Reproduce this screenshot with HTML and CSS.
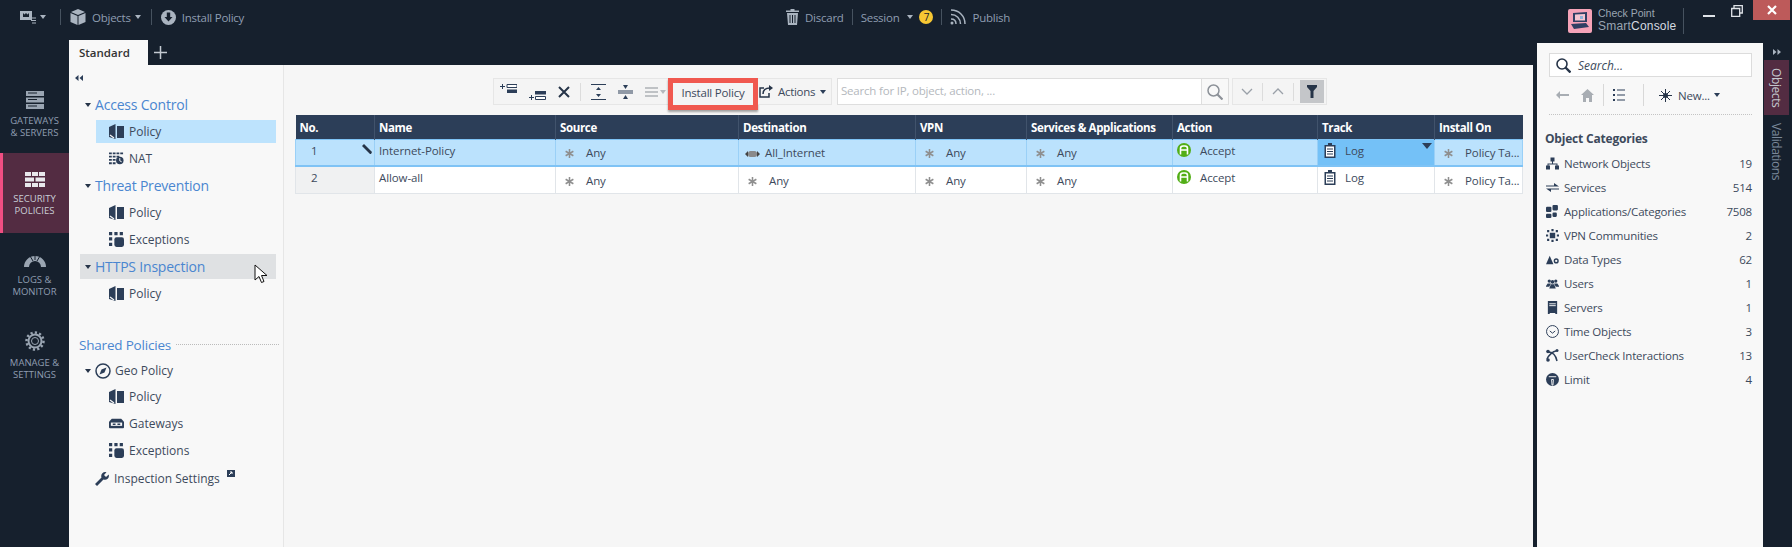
FILE: index.html
```html
<!DOCTYPE html>
<html lang="en">
<head>
    <meta charset="UTF-8">
    <title>SmartConsole</title>
    <link rel="stylesheet" href="styles.css">
</head>
<body>
    <svg class="sprite" xmlns="http://www.w3.org/2000/svg">
        <symbol id="i-policy" viewBox="0 0 15 15"><path d="M0 3l6.500-3v15l-6.500-2zM8 2h7v12H8z"/><path d="M1 11l4 3" stroke="#f8f8f8" stroke-width="1.200"/></symbol>
        <symbol id="i-nat" viewBox="0 0 16 13"><path d="M0 0h3v2H0zM4 0h3v2H4zM8 0h3v2H8zM12 0h3v2h-3zM0 3.500h3v2H0zM4 3.500h3v2H4zM8 3.500h3v2H8zM0 7h3v2H0zM4 7h3v2H4zM0 10.500h3v2H0zM4 10.500h3v2H4z"/><circle cx="11.500" cy="8.500" r="4"/><path d="M11.500 6v3l2 1" stroke="#fff" fill="none"/></symbol>
        <symbol id="i-exc" viewBox="0 0 14 14"><path d="M0 0h3v3H0zM5 0h3v3H5zM10 0h3v3h-3zM0 5h3v3H0zM0 10h3v3H0z"/><rect x="5" y="5" width="9" height="9" rx="2"/></symbol>
        <symbol id="i-gate" viewBox="0 0 16 10"><path d="M3 0h10l3 3v6a1 1 0 0 1-1 1H1a1 1 0 0 1-1-1V3z"/><path d="M2 4h12v3.500H2z" fill="#f8f8f8"/><path d="M4 5h3v1.500H4zM9 5h3v1.500H9z"/></symbol>
        <symbol id="i-any" viewBox="0 0 10 10"><path d="M5 0v10M.7 2.500l8.600 5M9.300 2.500l-8.600 5" stroke="#8f8f8f" stroke-width="1.700"/></symbol>
        <symbol id="i-accept" viewBox="0 0 14 14"><circle cx="7" cy="7" r="7" fill="#52ae16"/><path d="M3.500 11.500V5.500Q3.500 3 6 3h2Q10.500 3 10.500 5.500v6M3.500 7h7" fill="none" stroke="#fff" stroke-width="1.600"/></symbol>
        <symbol id="i-log" viewBox="0 0 12 15"><path d="M4 0h4v2h3.500v13H.500V2H4z" fill="#2c3e58"/><path d="M2 3.500h8v10H2z" fill="#fff"/><path d="M3 6h6M3 8.500h6M3 11h6" stroke="#2c3e58"/></symbol>
        <symbol id="i-caret" viewBox="0 0 6 4"><path d="M0 0h6L3 4z"/></symbol>
    </svg>

    <div class="app">
        <!-- Górny pasek -->
        <header class="topbar">
            <div class="top-group top-left">
                <svg class="top-ico" width="16" height="14" viewBox="0 0 16 14"><path d="M0 1h12v9H0z" fill="#aab4c0"/><path d="M3 3l1.500 1.500L6 3l1.500 1.500L9 3v4H3z" fill="#16202d"/><path d="M10 8h6M11 10.500h5M12 13h4" stroke="#aab4c0"/></svg>
                <svg class="caret"><use href="#i-caret"/></svg>
                <span class="top-sep sep-a"></span>
                <svg class="top-ico" width="16" height="16" viewBox="0 0 16 16"><path d="M8 0l7 3-7 3-7-3z" fill="#aab4c0"/><path d="M.500 4l7 3v9l-7-3zM15.500 4l-7 3v9l7-3z" fill="#aab4c0"/></svg>
                <span class="top-text objects">Objects</span>
                <svg class="caret"><use href="#i-caret"/></svg>
                <span class="top-sep sep-b"></span>
                <svg class="top-ico" width="15" height="15" viewBox="0 0 15 15"><circle cx="7.500" cy="7.500" r="7.500" fill="#aab4c0"/><path d="M5.800 2.500h3.400v4.500h2.300L7.500 11.500 3.500 7h2.300z" fill="#16202d"/></svg>
                <span class="top-text">Install Policy</span>
            </div>
            <div class="top-group top-center">
                <svg class="top-ico" width="13" height="16" viewBox="0 0 13 16"><path d="M4.500 0h4v1.500H13V3H0V1.500h4.500zM1 4h11l-1 12H2z" fill="#aab4c0"/><path d="M4 6v8M6.500 6v8M9 6v8" stroke="#16202d"/></svg>
                <span class="top-text">Discard</span>
                <span class="top-sep"></span>
                <span class="top-text after-sep">Session</span>
                <svg class="caret session-caret"><use href="#i-caret"/></svg>
                <span class="badge">7</span>
                <span class="top-sep"></span>
                <svg class="top-ico" width="16" height="16" viewBox="0 0 16 16" fill="none" stroke="#aab4c0" stroke-width="1.500"><path d="M1 1c8 0 14 6 14 14M1 5.500c5.500 0 9.500 4 9.500 9.500M1 10c3 0 5 2 5 5"/><circle cx="2" cy="14" r="1.500" fill="#aab4c0" stroke="none"/></svg>
                <span class="top-text">Publish</span>
            </div>
            <div class="top-group top-right">
                <svg class="logo" width="24" height="24" viewBox="0 0 24 24"><rect width="24" height="24" rx="2" fill="#f5a3b8"/><path d="M5 4l14-1v10H5z" fill="#2f3f63"/><path d="M7 5.500l10-.5v6.500H7z" fill="#f5c6d2"/><path d="M12 7h3v3h-3z" fill="#8fb2d8"/><path d="M3 15l15-1 3 4-15 2z" fill="#2f3f63"/></svg>
                <div class="logo-text"><span>Check Point</span><span>Smart<b>Console</b></span></div>
                <span class="top-sep logo-sep"></span>
                <span class="win-min"></span>
                <svg class="win-restore" width="12" height="12" viewBox="0 0 12 12" fill="none" stroke="#dfe3e8" stroke-width="1.300"><path d="M3 3V.700h8.300V8H9"/><path d="M.700 3.500h8V11.300h-8z"/></svg>
                <span class="win-close">
                    <svg width="10" height="10" viewBox="0 0 10 10"><path d="M1 1l8 8M9 1l-8 8" stroke="#fff" stroke-width="2.200"/></svg>
                </span>
            </div>
        </header>

        <!-- Lewe menu -->
        <nav class="nav">
            <div class="nav-item">
                <svg width="18" height="18" viewBox="0 0 18 18"><path d="M0 0h18v5H0zM0 6.500h18v5H0zM0 13h18v5H0z" fill="#9aa5b2"/><path d="M2 2h9M2 8.500h9M2 15h9" stroke="#16202d"/></svg>
                <span>GATEWAYS<br>&amp; SERVERS</span>
            </div>
            <div class="nav-item active">
                <svg width="20" height="15" viewBox="0 0 20 15"><path d="M0 0h6v4H0zM7 0h6v4H7zM14 0h6v4h-6zM0 5.500h9v4H0zM10.500 5.500H20v4h-9.500zM0 11h6v4H0zM7 11h6v4H7zM14 11h6v4h-6z" fill="#e8e8ec"/></svg>
                <span>SECURITY<br>POLICIES</span>
            </div>
            <div class="nav-item">
                <svg width="22" height="14" viewBox="0 0 22 14"><path d="M0 13A11 11 0 0 1 22 13h-5A6 6 0 0 0 5 13z" fill="#9aa5b2"/><path d="M6 2l3 5M11 0v6M16 2l-3 5" stroke="#16202d"/></svg>
                <span>LOGS &amp;<br>MONITOR</span>
            </div>
            <div class="nav-item">
                <svg width="20" height="20" viewBox="0 0 20 20" fill="none" stroke="#9aa5b2"><circle cx="10" cy="10" r="6.500" stroke-width="2"/><circle cx="10" cy="10" r="3.500"/><circle cx="10" cy="10" r="8.500" stroke-width="2.500" stroke-dasharray="2.200 2.200"/></svg>
                <span>MANAGE &amp;<br>SETTINGS</span>
            </div>
        </nav>

        <div class="tabs">
            <div class="tab">Standard</div>
            <svg class="tab-add" width="13" height="13" viewBox="0 0 13 13"><path d="M6.500 0v13M0 6.500h13" stroke="#c4cad2" stroke-width="1.500"/></svg>
        </div>

        <main class="main">
            <aside class="tree">
                <div class="collapse">
                    <svg width="8" height="6" viewBox="0 0 8 6"><path d="M3.500 0v6L0 3zM8 0v6L4.500 3z" fill="#2c3e58"/></svg>
                </div>
                <div class="row head"><svg class="tw"><use href="#i-caret"/></svg>Access Control</div>
                <div class="row leaf selected"><svg class="leaf-ico"><use href="#i-policy"/></svg>Policy</div>
                <div class="row leaf"><svg class="leaf-ico"><use href="#i-nat"/></svg>NAT</div>
                <div class="row head"><svg class="tw"><use href="#i-caret"/></svg>Threat Prevention</div>
                <div class="row leaf"><svg class="leaf-ico"><use href="#i-policy"/></svg>Policy</div>
                <div class="row leaf"><svg class="leaf-ico"><use href="#i-exc"/></svg>Exceptions</div>
                <div class="row head hovered"><svg class="tw"><use href="#i-caret"/></svg>HTTPS Inspection
                    <svg class="cursor" width="14" height="20" viewBox="0 0 14 20"><path d="M1 1v15l4-3.500 2.500 6 2.500-1-2.500-6H13z" fill="#fff" stroke="#111"/></svg>
                </div>
                <div class="row leaf"><svg class="leaf-ico"><use href="#i-policy"/></svg>Policy</div>

                <div class="shared"><span>Shared Policies</span><i></i></div>
                <div class="row geo"><svg class="tw"><use href="#i-caret"/></svg>
                    <svg class="geo-ico" width="16" height="16" viewBox="0 0 16 16"><circle cx="8" cy="8" r="7" fill="none" stroke="#2c3e58" stroke-width="1.500"/><path d="M11.500 4.500L9.500 9.500 4.500 11.500 6.500 6.500z" fill="#2c3e58"/></svg>
                    Geo Policy
                </div>
                <div class="row leaf"><svg class="leaf-ico"><use href="#i-policy"/></svg>Policy</div>
                <div class="row leaf"><svg class="leaf-ico"><use href="#i-gate"/></svg>Gateways</div>
                <div class="row leaf"><svg class="leaf-ico"><use href="#i-exc"/></svg>Exceptions</div>
                <div class="row settings">
                    <svg width="14" height="14" viewBox="0 0 14 14"><path d="M0 12l6.500-6.500A4 4 0 0 1 11.500.300L9 3l2 2 2.700-2.500A4 4 0 0 1 8.500 7.500L2 14z" fill="#2c3e58"/></svg>
                    Inspection Settings
                    <svg class="ext" width="8" height="7" viewBox="0 0 8 7"><path d="M0 0h8v7H0z" fill="#2c3e58"/><path d="M2 5l3-3M3 2h2v2" stroke="#fff" fill="none"/></svg>
                </div>
            </aside>

            <section class="content">
                <div class="toolbar">
                    <div class="tool-box rule-tools">
                        <svg width="17" height="9" viewBox="0 0 17 9"><path d="M0 2.500h5M2.500 0v5" stroke="#2c3e58"/><path d="M7 .500h10v3H7z" fill="#fff" stroke="#2c3e58"/><path d="M7 5.500h10V9H7z" fill="#2c3e58"/></svg>
                        <svg class="low" width="17" height="9" viewBox="0 0 17 9"><path d="M0 6.500h5M2.500 4v5" stroke="#2c3e58"/><path d="M6 0h11v3.500H6z" fill="#2c3e58"/><path d="M6.500 5.500h10v3h-10z" fill="#fff" stroke="#2c3e58"/></svg>
                        <svg width="12" height="12" viewBox="0 0 12 12"><path d="M1 1l10 10M11 1L1 11" stroke="#263448" stroke-width="2"/></svg>
                        <span class="tool-sep"></span>
                        <svg width="15" height="16" viewBox="0 0 15 16"><path d="M0 .500h15M0 15.500h15" stroke="#2c3e58"/><path d="M7.500 3l2.500 3H5zM7.500 13L5 10h5z" fill="#2c3e58"/></svg>
                        <svg width="15" height="16" viewBox="0 0 15 16"><path d="M0 7h15M0 9h15" stroke="#2c3e58"/><path d="M7.500 5L5 1h5zM7.500 11l2.500 4H5z" fill="#2c3e58"/></svg>
                        <svg width="13" height="10" viewBox="0 0 13 10"><path d="M0 1h13M0 5h13M0 9h13" stroke="#8a8f96" stroke-width="1.200"/></svg>
                        <svg class="caret dim"><use href="#i-caret"/></svg>
                    </div>
                    <button class="install-btn">Install Policy</button>
                    <div class="tool-box actions">
                        <svg width="14" height="13" viewBox="0 0 14 13" fill="none" stroke="#263448" stroke-width="1.500"><path d="M5 3H1v9h9V8"/><path d="M4 9c0-4 3-6 7-6"/><path d="M10 0l4 3-4 3z" fill="#263448" stroke="none"/></svg>
                        <span>Actions</span>
                        <svg class="caret dark"><use href="#i-caret"/></svg>
                    </div>
                    <div class="search-box">
                        <span class="search-text">Search for IP, object, action, ...</span>
                        <span class="search-btn">
                            <svg width="16" height="16" viewBox="0 0 16 16" fill="none" stroke="#8c9198" stroke-width="1.500"><circle cx="6.500" cy="6.500" r="5.500"/><path d="M10.500 10.500l5 5" stroke-width="2.200"/></svg>
                        </span>
                    </div>
                    <div class="tool-box nav-tools">
                        <svg width="12" height="7" viewBox="0 0 12 7" fill="none" stroke="#9aa0a8" stroke-width="1.300"><path d="M1 1l5 5 5-5"/></svg>
                        <span class="tool-sep"></span>
                        <svg width="12" height="7" viewBox="0 0 12 7" fill="none" stroke="#9aa0a8" stroke-width="1.300"><path d="M1 6l5-5 5 5"/></svg>
                        <span class="tool-sep"></span>
                        <span class="filter-btn">
                            <svg width="10" height="13" viewBox="0 0 10 13"><path d="M0 0h10v2L6.500 6v7h-3V6L0 2z" fill="#263448"/></svg>
                        </span>
                    </div>
                </div>

                <table class="rules">
                    <colgroup>
                        <col class="c-no"><col class="c-name"><col class="c-src"><col class="c-dst"><col class="c-vpn"><col class="c-svc"><col class="c-act"><col class="c-trk"><col class="c-ins">
                    </colgroup>
                    <thead>
                        <tr><th>No.</th><th>Name</th><th>Source</th><th>Destination</th><th>VPN</th><th>Services &amp; Applications</th><th>Action</th><th>Track</th><th>Install On</th></tr>
                    </thead>
                    <tbody>
                        <tr class="sel">
                            <td class="no">1<svg class="pencil" width="10" height="10" viewBox="0 0 10 10"><path d="M2 0l8 8-1 2-1 0L0 2z" fill="#263448"/></svg></td>
                            <td class="up">Internet-Policy</td>
                            <td><svg class="any"><use href="#i-any"/></svg>Any</td>
                            <td><svg class="net" width="15" height="8" viewBox="0 0 15 8"><path d="M0 4l3-3v6zM15 4l-3-3v6z" fill="#444"/><rect x="3" y="1" width="9" height="6" rx="2.500" fill="#8a8a8a"/></svg>All_Internet</td>
                            <td><svg class="any"><use href="#i-any"/></svg>Any</td>
                            <td><svg class="any"><use href="#i-any"/></svg>Any</td>
                            <td class="up"><svg class="acc"><use href="#i-accept"/></svg>Accept</td>
                            <td class="up trk-sel"><svg class="log"><use href="#i-log"/></svg>Log<svg class="trk-caret" width="10" height="6" viewBox="0 0 10 6"><path d="M0 0h10L5 6z" fill="#2c3e58"/></svg></td>
                            <td><svg class="any"><use href="#i-any"/></svg>Policy Ta...</td>
                        </tr>
                        <tr>
                            <td class="no">2</td>
                            <td class="up">Allow-all</td>
                            <td><svg class="any"><use href="#i-any"/></svg>Any</td>
                            <td><svg class="any"><use href="#i-any"/></svg>Any</td>
                            <td><svg class="any"><use href="#i-any"/></svg>Any</td>
                            <td><svg class="any"><use href="#i-any"/></svg>Any</td>
                            <td class="up"><svg class="acc"><use href="#i-accept"/></svg>Accept</td>
                            <td class="up"><svg class="log"><use href="#i-log"/></svg>Log</td>
                            <td><svg class="any"><use href="#i-any"/></svg>Policy Ta...</td>
                        </tr>
                    </tbody>
                </table>
            </section>
        </main>

        <!-- Panel obiektów -->
        <aside class="objects-panel">
            <div class="obj-search">
                <svg width="15" height="15" viewBox="0 0 15 15" fill="none" stroke="#263448" stroke-width="1.600"><circle cx="6" cy="6" r="5"/><path d="M9.500 9.500l5 5" stroke-width="2.400"/></svg>
                <span>Search...</span>
            </div>
            <div class="obj-tools">
                <svg width="13" height="8" viewBox="0 0 13 8"><path d="M0 4l4-4v3h9v2H4v3z" fill="#a8adb3"/></svg>
                <svg class="home" width="13" height="13" viewBox="0 0 13 13"><path d="M6.500 0L13 6h-2v7H8V9H5v4H2V6H0z" fill="#a8adb3"/></svg>
                <span class="obj-sep"></span>
                <svg class="list" width="12" height="12" viewBox="0 0 12 12"><path d="M0 0h2v2H0zM0 5h2v2H0zM0 10h2v2H0zM4 .500h8v1H4zM4 5.500h8v1H4zM4 10.500h8v1H4z" fill="#2c3e58"/></svg>
                <span class="obj-sep"></span>
                <svg class="new-ico" width="13" height="13" viewBox="0 0 13 13"><path d="M6.500 0v13M0 6.500h13M2 2l9 9M11 2l-9 9" stroke="#263448"/><circle cx="6.500" cy="6.500" r="2.500" fill="#263448"/></svg>
                <span class="new-text">New...</span>
                <svg class="caret dark"><use href="#i-caret"/></svg>
            </div>
            <div class="obj-dots"></div>
            <h3 class="obj-title">Object Categories</h3>
            <ul class="obj-list">
                <li><svg viewBox="0 0 13 12"><path d="M4.500 0h4v4h-4zM0 8h4v4H0zM9 8h4v4H9zM6 4h1v2h4.500v2h-1V7h-8v1h-1V6H6z"/></svg><span>Network Objects</span><em>19</em></li>
                <li><svg viewBox="0 0 13 12"><path d="M0 4h8V1.500L13 5H0zM13 8H5v2.500L0 7h13z"/></svg><span>Services</span><em>514</em></li>
                <li><svg viewBox="0 0 12 12"><rect width="5" height="5" y="1.500" rx="1"/><rect width="5" height="5" x="6" rx="1"/><rect width="5" height="4" y="8" rx="1"/><rect width="4" height="4" x="6" y="7" rx="1"/></svg><span>Applications/Categories</span><em>7508</em></li>
                <li><svg viewBox="0 0 12 12"><path d="M5 0h2v2H5zM1 1h2v2H1zM9 1h2v2H9zM0 5h2v2H0zM10 5h2v2h-2zM1 9h2v2H1zM9 9h2v2H9zM5 10h2v2H5zM3.500 3.500h5v5h-5z"/></svg><span>VPN Communities</span><em>2</em></li>
                <li><svg viewBox="0 0 14 10"><path d="M0 10L4 1l4 9z"/><circle class="ring" cx="11" cy="6.500" r="2"/></svg><span>Data Types</span><em>62</em></li>
                <li><svg viewBox="0 0 16 12"><circle cx="4" cy="3" r="2"/><circle cx="12" cy="3" r="2"/><circle cx="8" cy="4" r="2.200"/><path d="M0 9l2-3h4L4 10H0zM16 9l-2-3h-4l2 4h4zM4 12l2-5h4l2 5z"/></svg><span>Users</span><em>1</em></li>
                <li><svg viewBox="0 0 10 14"><path d="M0 0h10v14H8v-1H2v1H0z"/><path d="M1.500 3h7M1.500 5h7" stroke="#f8f8f8"/></svg><span>Servers</span><em>1</em></li>
                <li><svg viewBox="0 0 12 12"><circle class="thin" cx="6" cy="6" r="5.500"/><path class="thin" d="M3.500 5.500L6 7.500 8.500 5.500"/></svg><span>Time Objects</span><em>3</em></li>
                <li><svg viewBox="0 0 13 13"><circle cx="2" cy="2.500" r="1.800"/><circle cx="11" cy="1.500" r="1.500"/><circle cx="2" cy="11" r="1.800"/><path class="ring" d="M2 3c5 0 8 4 9 9M1 10c1-3 6-8 9-8"/></svg><span>UserCheck Interactions</span><em>13</em></li>
                <li><svg class="limit" viewBox="0 0 14 14"><circle cx="7" cy="7" r="7"/><path d="M6 7h2l-.500 6h-1zM3 4h8" stroke="#f8f8f8" stroke-width="1"/></svg><span>Limit</span><em>4</em></li>
            </ul>
        </aside>

        <div class="side-tabs">
            <svg class="expand" width="8" height="6" viewBox="0 0 8 6"><path d="M0 0v6l3.500-3zM4.500 0v6L8 3z" fill="#aab4c0"/></svg>
            <div class="side-tab on">Objects</div>
            <div class="side-tab">Validations</div>
        </div>
    </div>
</body>
</html>
```

FILE: styles.css
```css
* {
    box-sizing: border-box;
}
html, body {
    margin: 0;
    height: 100%;
    overflow: hidden;
}
body {
    font-family: "Open Sans", Arial, sans-serif;
    font-size: 11.5px;
    color: #3d4a5c;
    background-color: #16202d;
}
.sprite {
    display: none;
}

.app {
    display: grid;
    grid-template-columns: 69px 1464px 4px 226px 29px;
    grid-template-rows: 40px 25px 482px;
    height: 547px;
    width: 1792px;
}

/* Górny pasek */
.topbar {
    grid-column: 1 / -1;
    grid-row: 1;
    display: flex;
    align-items: flex-start;
    color: #8f9db1;
}
.top-group {
    display: flex;
    align-items: center;
    height: 34px;
}
.top-left {
    padding-left: 20px;
    width: 786px;
}
.top-center {
    width: 782px;
}
.top-right {
    height: 42px;
    align-items: flex-start;
}
.top-text {
    margin-left: 6px;
    white-space: nowrap;
    font-size: 11.500px;
    letter-spacing: -0.25px;
}
.top-text.after-sep {
    margin-left: 0;
}
.top-sep {
    width: 1px;
    height: 16px;
    background-color: #46525f;
    margin: 0 8px;
}
.sep-a {
    margin: 0 9px 0 14px;
}
.sep-b {
    margin: 0 9px 0 10px;
}
.caret {
    width: 6px;
    height: 4px;
    margin-left: 4px;
    fill: #aab4c0;
    flex: none;
}
.top-left .caret:first-of-type {
    margin-left: 8px;
}
.session-caret {
    margin-left: 8px;
}
.caret.dark {
    fill: #2c3e58;
}
.caret.dim {
    fill: #b5b9be;
    margin-left: 3px;
}
.badge {
    width: 14px;
    height: 14px;
    border-radius: 50%;
    background-color: #f7c733;
    color: #16202d;
    font-size: 10px;
    line-height: 14px;
    text-align: center;
    margin-left: 6px;
}
.logo {
    margin-top: 9px;
}
.logo-text {
    display: flex;
    flex-direction: column;
    margin: 7px 0 0 6px;
    width: 80px;
    font-family: "Liberation Sans", Arial, sans-serif;
    font-size: 10.500px;
    line-height: 13px;
    color: #9aa5b2;
}
.logo-text span:last-child {
    font-size: 12px;
    letter-spacing: 0.2px;
}
.logo-text b {
    font-weight: 400;
    color: #d5dae0;
}
.logo-sep {
    height: 26px;
    margin: 8px 0 0 5px;
}
.win-min {
    width: 12px;
    height: 2px;
    background-color: #dfe3e8;
    margin: 15px 0 0 19px;
}
.win-restore {
    margin: 5px 0 0 16px;
}
.win-close {
    width: 37px;
    height: 20px;
    margin-left: 10px;
    background-color: #bd5a5a;
    display: flex;
    align-items: center;
    justify-content: center;
}

/* Lewe menu */
.nav {
    grid-column: 1;
    grid-row: 2 / 4;
    padding-top: 33px;
}
.nav-item {
    height: 80px;
    display: flex;
    flex-direction: column;
    align-items: center;
    gap: 6px;
    padding-top: 18px;
    font-size: 9.500px;
    line-height: 12px;
    text-align: center;
    color: #8f9db1;
}
.nav-item.active {
    background-color: #532c42;
    border-left: 3px solid #f04e82;
    color: #c9ced6;
    padding-right: 3px;
    padding-top: 19px;
}
.nav-item:nth-child(3) {
    padding-top: 21px;
}
.nav-item:nth-child(4) {
    padding-top: 18px;
}

/* Zakładki */
.tabs {
    grid-column: 2;
    grid-row: 2;
    display: flex;
    align-items: center;
}
.tab {
    width: 79px;
    height: 25px;
    background-color: #f8f8f8;
    color: #333;
    font-weight: 600;
    font-size: 11.500px;
    line-height: 25px;
    padding-left: 10px;
}
.tab-add {
    margin-left: 6px;
}

.main {
    grid-column: 2;
    grid-row: 3;
    display: flex;
    background-color: #fff;
}

/* Drzewo */
.tree {
    width: 215px;
    display: flex;
    flex-direction: column;
    background-color: #f8f8f8;
    border-right: 1px solid #e6e6e6;
    position: relative;
    padding-top: 9px;
}
.collapse {
    height: 17px;
    padding-left: 6px;
    line-height: 6px;
}
.row {
    height: 23px;
    margin: 2px 0;
    display: flex;
    align-items: center;
    flex: none;
    white-space: nowrap;
}
.head {
    font-size: 14px;
    color: #4a86d0;
    margin-left: 11px;
    margin-right: 7px;
    padding-left: 5px;
    letter-spacing: -0.2px;
    position: relative;
}
.tw {
    width: 6px;
    height: 4px;
    fill: #263448;
    margin-right: 4px;
}
.leaf {
    margin-left: 27px;
    margin-right: 7px;
    padding-left: 13px;
    font-size: 12px;
}
.leaf-ico {
    width: 15px;
    height: 15px;
    fill: #2c3e58;
    margin-right: 5px;
}
.selected {
    background-color: #bde3fd;
}
.hovered {
    background-color: #dfe1e3;
    height: 25px;
    margin-top: 1px;
    margin-bottom: 1px;
}
.cursor {
    position: absolute;
    left: 174px;
    top: 10px;
}
.shared {
    display: flex;
    align-items: center;
    margin: 25px 4px 0 10px;
    height: 25px;
    font-size: 13.500px;
    letter-spacing: -0.2px;
    color: #4a86d0;
}
.shared i {
    flex: 1;
    margin-left: 5px;
    border-top: 1px dotted #bbb;
}
.geo {
    margin: 2px 0 1px 16px;
    font-size: 12px;
}
.geo-ico {
    margin: 0 4px 0 0;
}
.settings {
    margin: 3px 0 0 26px;
    font-size: 12px;
    gap: 5px;
}
.ext {
    margin: -10px 0 0 2px;
}

/* Treść */
.content {
    flex: 1;
    background-color: #f6f6f6;
    padding: 13px 10px 0 11px;
}
.toolbar {
    display: flex;
    height: 27px;
    padding-left: 198px;
}
.tool-box {
    height: 27px;
    display: flex;
    align-items: center;
    border: 1px solid #e6e6e6;
    background-color: #f4f4f4;
    flex: none;
}
.rule-tools {
    width: 175px;
    padding-left: 6px;
    gap: 12px;
    border-right: none;
}
.rule-tools svg:first-child {
    margin-top: -6px;
}
.rule-tools .low {
    margin-top: 8px;
}
.rule-tools .tool-sep {
    margin: 0 -2px;
}
.rule-tools .caret {
    margin-left: -10px;
}
.tool-sep {
    width: 1px;
    height: 18px;
    background-color: #dcdcdc;
    flex: none;
}
.install-btn {
    width: 90px;
    height: 32px;
    flex: none;
    border: 5px solid #f0584f;
    background-color: #f4f4f4;
    font-family: inherit;
    font-size: 11.500px;
    letter-spacing: -0.2px;
    color: #3d4a5c;
    padding: 0 0 3px;
    box-shadow: 0 2px 2px rgba(0, 0, 0, 0.35);
}
.actions {
    width: 74px;
    padding-left: 1px;
    gap: 5px;
    border-left: none;
    font-size: 11.500px;
    letter-spacing: -0.3px;
}
.actions .caret {
    margin-left: 0;
}
.search-box {
    width: 392px;
    height: 27px;
    margin-left: 5px;
    display: flex;
    align-items: stretch;
    background-color: #fff;
    border: 1px solid #dedede;
    flex: none;
}
.search-text {
    flex: 1;
    padding-left: 3px;
    line-height: 24px;
    color: #b4b8bd;
    letter-spacing: -0.2px;
}
.search-btn {
    width: 27px;
    display: flex;
    align-items: center;
    justify-content: center;
    border-left: 1px solid #dedede;
    background-color: #f8f8f8;
}
.nav-tools {
    width: 95px;
    margin-left: 3px;
    padding-left: 8px;
    gap: 9px;
}
.filter-btn {
    width: 24px;
    height: 23px;
    margin-left: -3px;
    background-color: #c4c6c9;
    display: flex;
    align-items: center;
    justify-content: center;
}

/* Tabela reguł */
.rules {
    table-layout: fixed;
    border-collapse: collapse;
    width: 1227px;
    margin-top: 10px;
    font-size: 11.500px;
}
.c-no { width: 79px; }
.c-name { width: 181px; }
.c-src { width: 183px; }
.c-dst { width: 177px; }
.c-vpn { width: 111px; }
.c-svc { width: 146px; }
.c-act { width: 145px; }
.c-trk { width: 117px; }
.c-ins { width: 88px; }
.rules th {
    height: 24px;
    background-color: #2c3e58;
    color: #fff;
    font-size: 11.500px;
    font-weight: 700;
    letter-spacing: -0.35px;
    text-align: left;
    padding: 1px 0 0 4px;
    border-right: 1px solid #41536c;
    white-space: nowrap;
}
.rules th:last-child {
    border-right: none;
}
.rules td {
    height: 27px;
    padding: 1px 0 0 9px;
    background-color: #fff;
    border: 1px solid #e1e5e9;
    white-space: nowrap;
    overflow: hidden;
    letter-spacing: -0.1px;
    position: relative;
}
.rules td.up {
    padding: 0 0 4px 4px;
}
.rules td.no {
    background-color: #f0f1f2;
    padding: 0 0 4px 15px;
}
.rules .sel td {
    background-color: #bbe2fd;
    border-top: 1px solid #7fc3f5;
    border-bottom: 2px solid #7fc3f5;
    border-left-color: #9ad0f7;
    border-right-color: #9ad0f7;
}
.rules .sel td.trk-sel {
    background-color: #74c1f7;
}
.any {
    width: 9px;
    height: 9px;
    margin-right: 12px;
    vertical-align: -1px;
}
.net {
    margin-right: 5px;
    margin-left: -3px;
    vertical-align: -1px;
}
.acc {
    width: 14px;
    height: 14px;
    margin-right: 9px;
    vertical-align: -2px;
}
.log {
    width: 12px;
    height: 15px;
    margin-right: 9px;
    vertical-align: -3px;
}
.pencil {
    position: absolute;
    right: 2px;
    top: 4px;
}
.trk-caret {
    position: absolute;
    right: 2px;
    top: 3px;
}
.rules td.up .log {
    margin-left: 2px;
}

/* Panel obiektów */
.objects-panel {
    grid-column: 4;
    grid-row: 2 / 4;
    margin-top: 3px;
    background-color: #f8f8f8;
    padding: 10px 11px 0 12px;
}
.obj-search {
    height: 24px;
    display: flex;
    align-items: center;
    background-color: #fff;
    border: 1px solid #dcdcdc;
    padding-left: 6px;
    gap: 7px;
    font-style: italic;
    font-size: 12px;
}
.obj-tools {
    display: flex;
    align-items: center;
    height: 22px;
    margin-top: 7px;
    padding-left: 7px;
}
.home {
    margin-left: 12px;
}
.obj-sep {
    width: 1px;
    height: 22px;
    background-color: #d8d8d8;
    margin-left: 9px;
}
.list {
    margin: 0 9px;
}
.new-ico {
    margin-left: 15px;
}
.new-text {
    margin-left: 6px;
    font-size: 11.500px;
    letter-spacing: -0.2px;
}
.obj-dots {
    border-top: 1px dotted #c4c4c4;
    margin-top: 8px;
}
.obj-title {
    margin: 16px 0 0 -4px;
    font-size: 12px;
    line-height: 16px;
    font-weight: 700;
    color: #3d4a5c;
    letter-spacing: -0.2px;
}
.obj-list {
    list-style: none;
    margin: 4px 0 0 0;
    padding: 0;
}
.obj-list li {
    display: flex;
    align-items: center;
    height: 24px;
    font-size: 11.500px;
    letter-spacing: -0.2px;
}
.obj-list svg {
    width: 13px;
    height: 13px;
    margin-right: 5px;
    fill: #2c3e58;
    flex: none;
    margin-left: -3px;
}
.obj-list .ring {
    fill: none;
    stroke: #2c3e58;
    stroke-width: 1.500;
}
.obj-list .thin {
    fill: none;
    stroke: #2c3e58;
    stroke-width: 0.900;
}
.obj-list span {
    flex: 1;
}
.obj-list em {
    font-style: normal;
}

/* Zakładki boczne */
.side-tabs {
    grid-column: 5;
    grid-row: 2 / 4;
    display: flex;
    flex-direction: column;
    align-items: center;
    padding-top: 9px;
    padding-right: 2px;
    color: #7a889a;
}
.expand {
    flex: none;
}
.side-tab {
    writing-mode: vertical-rl;
    font-size: 12px;
    width: 25px;
    line-height: 25px;
    text-align: center;
    letter-spacing: -0.4px;
}
.side-tab.on {
    background-color: #532c42;
    color: #c4c8ce;
    height: 55px;
    margin-top: 5px;
    margin-bottom: 8px;
}
```
